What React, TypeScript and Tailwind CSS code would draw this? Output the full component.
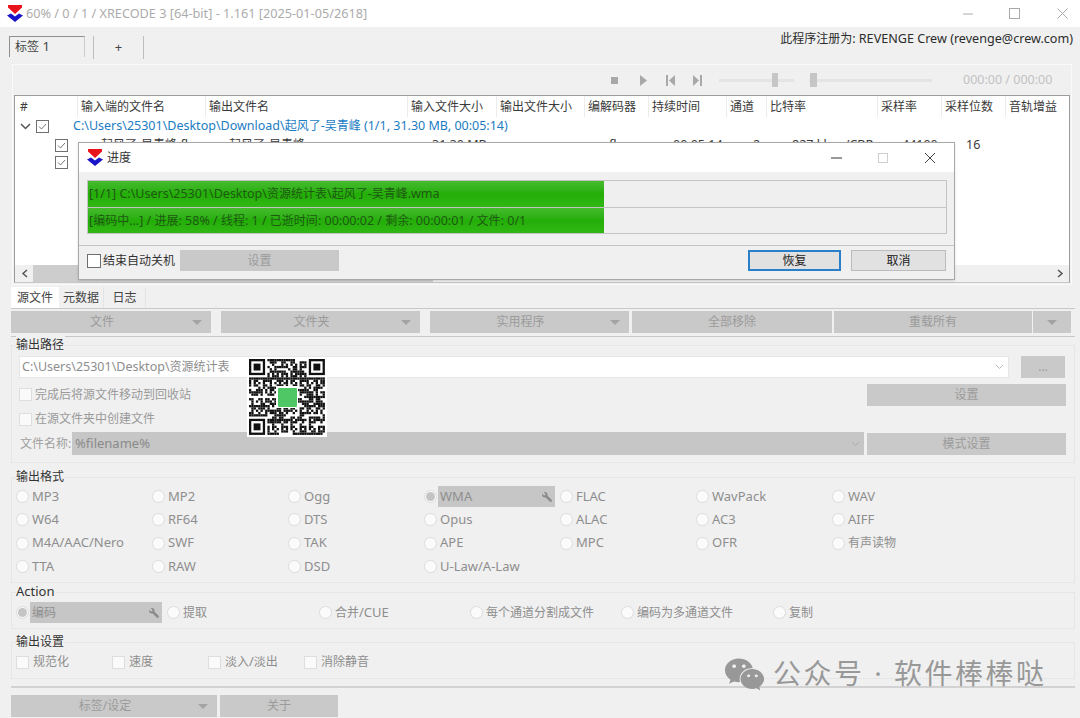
import { FaWeixin, FaWrench } from "react-icons/fa";
import type { ReactNode } from "react";

const tableCols =
  "grid grid-cols-[62px_128px_202px_89px_88px_64px_78px_40px_111px_64px_64px_64px]";

const headers = [
  "#",
  "输入端的文件名",
  "输出文件名",
  "输入文件大小",
  "输出文件大小",
  "编解码器",
  "持续时间",
  "通道",
  "比特率",
  "采样率",
  "采样位数",
  "音轨增益",
];

const formats = [
  ["MP3", "MP2", "Ogg", "WMA", "FLAC", "WavPack", "WAV"],
  ["W64", "RF64", "DTS", "Opus", "ALAC", "AC3", "AIFF"],
  ["M4A/AAC/Nero", "SWF", "TAK", "APE", "MPC", "OFR", "有声读物"],
  ["TTA", "RAW", "DSD", "U-Law/A-Law"],
];

// chinese runs sit a little smaller than the latin next to them
function T({ children }: { children: string }) {
  return (
    <>
      {children.split(/([\u4e00-\u9fff]+)/).map((part, i) =>
        i % 2 === 1 ? (
          <span key={i} className="text-[12px]">
            {part}
          </span>
        ) : (
          part
        ),
      )}
    </>
  );
}

function Logo() {
  return (
    <svg width="16" height="17" viewBox="0 0 16 17" className="shrink-0">
      <path d="M1 0h14v2.500L8 9 1 2.500z" fill="#e8141c" />
      <path d="M0 10.500L4 8.500l4 3 4-3 4 2-8 6.500z" fill="#1a14c8" />
    </svg>
  );
}

function Check({ checked = false, dim = true }: { checked?: boolean; dim?: boolean }) {
  return (
    <span
      className={`w-[13px] h-[13px] shrink-0 border flex items-center justify-center ${
        dim ? "bg-[#fafafa] border-[#dedede]" : "bg-white border-[#6f6f6f]"
      }`}
    >
      {checked && (
        <svg width="11" height="11" viewBox="0 0 11 11">
          <path d="M2 5.500l2.500 2.500L9 3" fill="none" stroke="#777" strokeWidth="1" />
        </svg>
      )}
    </span>
  );
}

function Radio({ on = false }: { on?: boolean }) {
  return (
    <span className="w-[13px] h-[13px] shrink-0 rounded-full bg-[#fbfbfb] border border-[#dcdcdc] flex items-center justify-center">
      {on && <span className="w-[9px] h-[9px] rounded-full bg-[#c4c4c4]" />}
    </span>
  );
}

function Arrow() {
  return <span className="w-0 h-0 border-x-[5px] border-x-transparent border-t-[5px] border-t-[#a3a3a3]" />;
}

function Btn({ className = "", children }: { className?: string; children: ReactNode }) {
  return (
    <div className={`h-[22px] bg-[#c9c9c9] text-[#9b9b9b] text-[12px] flex items-center justify-center shrink-0 ${className}`}>
      {children}
    </div>
  );
}

function MenuBtn({ className, label }: { className: string; label: string }) {
  return (
    <div className={`h-[22px] bg-[#c9c9c9] text-[#9b9b9b] text-[12px] flex items-center shrink-0 ${className}`}>
      <span className="flex-1 text-center pl-[10px]">{label}</span>
      <span className="w-[28px] flex justify-center">
        <Arrow />
      </span>
    </div>
  );
}

function Group({
  label,
  className = "",
  children,
}: {
  label: string;
  className?: string;
  children: ReactNode;
}) {
  return (
    <div className={`relative ml-[11px] w-[1064px] border border-[#e6e6e6] ${className}`}>
      <span className="absolute left-[4px] -top-[10px] leading-[16px] text-[#333] bg-[#f0f0f0] pr-[1px]">
        <T>{label}</T>
      </span>
      {children}
    </div>
  );
}

function RadioItem({ label }: { label: string }) {
  return (
    <div className="flex items-center gap-[3px] text-[#8e8e8e]">
      <Radio />
      <span>
        <T>{label}</T>
      </span>
    </div>
  );
}

function GrayPick({ label, className }: { label: string; className: string }) {
  return (
    <div className={`flex items-center gap-[1px] text-[#8e8e8e] ${className}`}>
      <Radio on />
      <div className="flex-1 h-[21px] bg-[#c6c6c6] flex items-center justify-between pl-[2px] pr-[3px]">
        <span>
          <T>{label}</T>
        </span>
        <FaWrench size={10} className="text-[#8a8a8a] -scale-x-100" />
      </div>
    </div>
  );
}

function Qr() {
  const n = 33;
  const cell = 2.3;
  const inFinder = (x: number, y: number) =>
    (x < 8 && y < 8) || (x > n - 9 && y < 8) || (x < 8 && y > n - 9);
  const cells: ReactNode[] = [];
  for (let y = 0; y < n; y++) {
    for (let x = 0; x < n; x++) {
      if (inFinder(x, y)) continue;
      const v = (x * 73 + y * 151 + x * y * 37 + ((x ^ y) * 19)) % 97;
      if (v % 5 < 3) {
        cells.push(<rect key={`${x}-${y}`} x={x * cell} y={y * cell} width={cell} height={cell} />);
      }
    }
  }
  const finder = (x: number, y: number) => (
    <g key={`${x}-${y}`}>
      <rect x={x * cell} y={y * cell} width={7 * cell} height={7 * cell} />
      <rect x={(x + 1) * cell} y={(y + 1) * cell} width={5 * cell} height={5 * cell} fill="#fff" />
      <rect x={(x + 2) * cell} y={(y + 2) * cell} width={3 * cell} height={3 * cell} />
    </g>
  );
  return (
    <svg width="76" height="76" viewBox="0 0 76 76" fill="#111">
      {cells}
      {finder(0, 0)}
      {finder(n - 7, 0)}
      {finder(0, n - 7)}
      <rect x="27" y="27" width="22" height="22" fill="#fff" />
      <rect x="29" y="29" width="19" height="19" rx="1" fill="#4fc765" />
    </svg>
  );
}

function MediaBar() {
  return (
    <div className="h-[30px] flex items-center pl-[598px]">
      <span className="w-[7px] h-[7px] bg-[#a8a8a8]" />
      <svg width="9" height="11" viewBox="0 0 9 11" className="ml-[21px]">
        <path d="M1 0l7 5.500-7 5.500z" fill="#a8a8a8" />
      </svg>
      <svg width="9" height="11" viewBox="0 0 9 11" className="ml-[18px]">
        <path d="M0 0h2v11H0zM9 0v11L3 5.500z" fill="#a8a8a8" />
      </svg>
      <svg width="9" height="11" viewBox="0 0 9 11" className="ml-[18px]">
        <path d="M9 0H7v11h2zM0 0v11l6-5.500z" fill="#a8a8a8" />
      </svg>
      <div className="ml-[17px] w-[75px] h-[3px] bg-[#e4e4e4] flex items-center">
        <span className="ml-[53px] w-[6px] h-[14px] bg-[#c6c6c6]" />
      </div>
      <div className="ml-[15px] w-[123px] h-[3px] bg-[#e4e4e4] flex items-center">
        <span className="ml-[1px] w-[7px] h-[14px] bg-[#c6c6c6]" />
      </div>
      <span className="ml-[31px] text-[#c2c2c2] text-[12.500px]">000:00 / 000:00</span>
    </div>
  );
}

function FileTable() {
  return (
    <div className="mx-[1px] h-[188px] bg-white border border-[#9c9c9c] border-b-[#c8c8c8] flex flex-col text-[#3a3a3a] text-[12.500px]">
      <div className={`${tableCols} h-[21px] items-center`}>
        {headers.map((h, i) => (
          <span
            key={h}
            className={`h-full flex items-center whitespace-nowrap text-[12px] ${
              i === 0 ? "pl-[5px]" : "pl-[3px] border-l border-[#ececec]"
            }`}
          >
            {h}
          </span>
        ))}
      </div>
      <div className="h-[19px] flex items-center">
        <svg width="11" height="7" viewBox="0 0 11 7" className="ml-[5px]">
          <path d="M1 1l4.500 4.500L10 1" fill="none" stroke="#555" strokeWidth="1.500" />
        </svg>
        <span className="ml-[5px]">
          <Check checked dim={false} />
        </span>
        <span className="ml-[24px] text-[#1c7cc4] whitespace-nowrap">
          <T>{"C:\\Users\\25301\\Desktop\\Download\\起风了-吴青峰 (1/1, 31.30 MB, 00:05:14)"}</T>
        </span>
      </div>
      <div className={`${tableCols} h-[17px] items-center whitespace-nowrap`}>
        <span className="pl-[40px]">
          <Check checked dim={false} />
        </span>
        <span className="pl-[24px]">
          <T>起风了-吴青峰.flac</T>
        </span>
        <span className="pl-[24px]">
          <T>起风了-吴青峰.wma</T>
        </span>
        <span className="pl-[25px]">31.30 MB</span>
        <span />
        <span className="pl-[25px]">flac</span>
        <span className="pl-[25px]">00:05:14</span>
        <span className="pl-[27px]">2</span>
        <span className="pl-[26px]">827 kbps/CBR</span>
        <span className="pl-[25px]">44100</span>
        <span className="pl-[25px]">16</span>
      </div>
      <div className="h-[18px] flex items-center pl-[40px]">
        <Check checked dim={false} />
      </div>
      <div className="flex-1" />
      <div className="h-[17px] bg-[#f0f0f0] flex items-center justify-between">
        <div className="flex items-center h-full">
          <span className="w-[18px] flex justify-center">
            <svg width="7" height="9" viewBox="0 0 7 9">
              <path d="M6 1L2 4.500 6 8" fill="none" stroke="#555" strokeWidth="1.500" />
            </svg>
          </span>
          <span className="w-[400px] h-full bg-[#cdcdcd]" />
        </div>
        <span className="w-[18px] flex justify-center">
          <svg width="7" height="9" viewBox="0 0 7 9">
            <path d="M1 1l4 3.500L1 8" fill="none" stroke="#555" strokeWidth="1.500" />
          </svg>
        </span>
      </div>
    </div>
  );
}

function ProgressDialog() {
  const bar = "bg-[#efefef] border-b border-[#c4c4c4] relative";
  const fill =
    "absolute inset-y-0 left-0 w-[516px] bg-gradient-to-b from-[#45bb2c] via-[#24ae08] to-[#30b714]";
  const label = "relative pl-[1px] leading-[26px] text-[#1d5a12] text-[12.500px] whitespace-nowrap";
  return (
    <div className="absolute left-[78px] top-[142px] w-[877px] h-[138px] bg-[#f0f0f0] border border-[#a8a8a8] shadow-sm flex flex-col">
      <div className="h-[29px] bg-white flex items-center pl-[8px] shrink-0">
        <Logo />
        <span className="ml-[4px] text-[#333] text-[12px]">进度</span>
        <svg width="11" height="2" viewBox="0 0 11 2" className="ml-[700px]">
          <path d="M0 1h11" stroke="#333" />
        </svg>
        <span className="ml-[36px] w-[10px] h-[10px] border border-[#cfcfcf]" />
        <svg width="12" height="12" viewBox="0 0 12 12" className="ml-[36px]">
          <path d="M1 1l10 10M11 1L1 11" stroke="#444" />
        </svg>
      </div>
      <div className="mx-[8px] mt-[8px] w-[860px] border border-[#c4c4c4] border-b-0">
        <div className={`${bar} h-[27px]`}>
          <div className={fill} />
          <div className={label}>
            <T>{"[1/1] C:\\Users\\25301\\Desktop\\资源统计表\\起风了-吴青峰.wma"}</T>
          </div>
        </div>
        <div className={`${bar} h-[26px]`}>
          <div className={fill} />
          <div className={label}>
            <T>[编码中...] / 进展: 58% / 线程: 1 / 已逝时间: 00:00:02 / 剩余: 00:00:01 / 文件: 0/1</T>
          </div>
        </div>
      </div>
      <div className="mt-[11px] border-t border-[#c4c4c4] flex items-center pt-[4px] pl-[8px] text-[12px]">
        <span className="w-[14px] h-[14px] bg-white border border-[#6f6f6f]" />
        <span className="ml-[2px] text-[#333] whitespace-nowrap">结束自动关机</span>
        <Btn className="ml-[5px] w-[159px] !h-[21px]">设置</Btn>
        <div className="ml-[409px] w-[93px] h-[21px] bg-[#e1e1e1] border-2 border-[#2a7fc9] flex items-center justify-center text-[#222]">
          恢复
        </div>
        <div className="ml-[10px] w-[95px] h-[21px] bg-[#e1e1e1] border border-[#bcbcbc] flex items-center justify-center text-[#222]">
          取消
        </div>
      </div>
    </div>
  );
}

export default function App() {
  return (
    <div className="relative w-[1080px] h-[718px] overflow-hidden bg-[#f0f0f0] text-[13px] font-['Noto_Sans','Noto_Sans_CJK_SC',sans-serif]">
      {/* title bar */}
      <div className="h-[27px] bg-white flex items-center pl-[7px]">
        <Logo />
        <span className="ml-[3px] text-[#acacac] text-[12.700px] whitespace-nowrap">
          60% / 0 / 1 / XRECODE 3 [64-bit] - 1.161 [2025-01-05/2618]
        </span>
        <svg width="10" height="2" viewBox="0 0 10 2" className="ml-[596px]">
          <path d="M0 1h10" stroke="#aaa" />
        </svg>
        <span className="ml-[36px] w-[11px] h-[11px] border border-[#aaa]" />
        <svg width="11" height="11" viewBox="0 0 11 11" className="ml-[37px]">
          <path d="M.5.500l10 10M10.500.500l-10 10" stroke="#aaa" />
        </svg>
      </div>

      {/* tabs */}
      <div className="h-[37px] flex items-start pt-[9px] pl-[9px] text-[#444]">
        <div className="w-[76px] h-[21px] pl-[5px] flex items-center border-t border-l border-[#8f8f8f] border-r-[#ccc] border-r">
          <span>
            <T>标签 1</T>
          </span>
        </div>
        <div className="ml-[8px] h-[23px] w-[51px] border-x border-[#bdbdbd] flex items-center justify-center">+</div>
        <div className="ml-auto -mt-[6px] mr-[7px] text-[#2c2c2c] text-[12.600px] whitespace-nowrap">
          <T>此程序注册为: REVENGE Crew (revenge@crew.com)</T>
        </div>
      </div>

      {/* list panel */}
      <div className="ml-[12px] w-[1060px] border border-[#fafafa]">
        <MediaBar />
        <FileTable />
        <div className="h-[1px]" />
      </div>

      {/* page tabs */}
      <div className="mt-[2px] ml-[11px] h-[22px] w-[1064px] border-b border-[#c8c8c8] flex text-[#444] text-[12px]">
        <span className="w-[48px] bg-white flex items-center justify-center">源文件</span>
        <span className="w-[45px] flex items-center justify-center border-r border-[#e4e4e4]">元数据</span>
        <span className="w-[42px] flex items-center justify-center border-r border-[#e4e4e4]">日志</span>
      </div>

      {/* actions */}
      <div className="mt-[2px] ml-[11px] flex">
        <MenuBtn className="w-[200px]" label="文件" />
        <MenuBtn className="ml-[10px] w-[199px]" label="文件夹" />
        <MenuBtn className="ml-[10px] w-[199px]" label="实用程序" />
        <Btn className="ml-[3px] w-[200px]">全部移除</Btn>
        <Btn className="ml-[2px] w-[198px]">重载所有</Btn>
        <Btn className="ml-[1px] w-[38px]">
          <Arrow />
        </Btn>
      </div>
      <div className="mt-[3px] ml-[11px] w-[1064px] border-b border-[#c8c8c8]" />

      {/* output path */}
      <Group label="输出路径" className="mt-[8px] h-[118px]">
        <div className="pt-[10px] pl-[7px] flex">
          <div className="w-[990px] h-[22px] bg-white border border-[#e6e6e6] flex items-center justify-between pl-[2px] pr-[4px] text-[#8e8e8e] text-[12.500px]">
            <span>
              <T>{"C:\\Users\\25301\\Desktop\\资源统计表"}</T>
            </span>
            <svg width="9" height="6" viewBox="0 0 9 6">
              <path d="M1 1l3.500 3.500L8 1" fill="none" stroke="#bbb" />
            </svg>
          </div>
          <Btn className="ml-[12px] w-[44px]">...</Btn>
        </div>
        <div className="mt-[6px] pl-[7px] h-[21px] flex items-center gap-[3px] text-[#9a9a9a] text-[12px]">
          <Check />
          <span>完成后将源文件移动到回收站</span>
          <Btn className="ml-auto mr-[8px] w-[199px]">设置</Btn>
        </div>
        <div className="mt-[3px] pl-[7px] h-[22px] flex items-center gap-[3px] text-[#9a9a9a] text-[12px]">
          <Check />
          <span>在源文件夹中创建文件</span>
        </div>
        <div className="mt-[2px] pl-[8px] h-[23px] flex items-center text-[#a0a0a0] text-[12px]">
          <span className="w-[52px] whitespace-nowrap">文件名称:</span>
          <div className="w-[792px] h-[23px] bg-[#c6c6c6] flex items-center justify-between pl-[3px] pr-[4px] text-[#8a8a8a] text-[13px]">
            <span>%filename%</span>
            <svg width="9" height="6" viewBox="0 0 9 6">
              <path d="M1 1l3.500 3.500L8 1" fill="none" stroke="#aaa" />
            </svg>
          </div>
          <Btn className="ml-[3px] w-[199px]">模式设置</Btn>
        </div>
      </Group>

      {/* output format */}
      <Group label="输出格式" className="mt-[14px] h-[106px]">
        <div className="pt-[7px] pl-[4px] grid grid-cols-[repeat(7,136px)] auto-rows-[23.300px]">
          {formats.flat().map((f) =>
            f === "WMA" ? (
              <GrayPick key={f} label={f} className="w-[131px]" />
            ) : (
              <RadioItem key={f} label={f} />
            ),
          )}
        </div>
      </Group>

      {/* action */}
      <Group label="Action" className="mt-[9px] h-[37px]">
        <div className="pt-[9px] pl-[4px] grid grid-cols-[151px_152px_151px_151px_152px_1fr] h-[30px] items-center">
          <GrayPick label="编码" className="w-[146px]" />
          <RadioItem label="提取" />
          <RadioItem label="合并/CUE" />
          <RadioItem label="每个通道分割成文件" />
          <RadioItem label="编码为多通道文件" />
          <RadioItem label="复制" />
        </div>
      </Group>

      {/* output settings */}
      <Group label="输出设置" className="mt-[13px] h-[37px]">
        <div className="pt-[11px] pl-[4px] grid grid-cols-[repeat(4,96px)] text-[#8e8e8e]">
          {["规范化", "速度", "淡入/淡出", "消除静音"].map((s) => (
            <div key={s} className="flex items-center gap-[4px] h-[16px]">
              <Check />
              <span>
                <T>{s}</T>
              </span>
            </div>
          ))}
        </div>
      </Group>

      <div className="mt-[7px] ml-[11px] w-[1064px] border-b-2 border-[#d2d2d2]" />

      <div className="mt-[7px] ml-[11px] flex">
        <MenuBtn className="w-[206px]" label="标签/设定" />
        <Btn className="ml-[3px] w-[118px]">关于</Btn>
      </div>

      <ProgressDialog />

      {/* overlays from the source picture */}
      <div className="absolute left-[247px] top-[357px] w-[80px] h-[80px] bg-white flex items-center justify-center">
        <Qr />
      </div>
      <div className="absolute left-[724px] top-[654px] flex items-center text-[#989898] whitespace-nowrap">
        <FaWeixin size={41} />
        <span className="ml-[8px] -mt-[3px] text-[28px] leading-[40px] tracking-[2.500px]">公众号 · 软件棒棒哒</span>
      </div>
    </div>
  );
}
